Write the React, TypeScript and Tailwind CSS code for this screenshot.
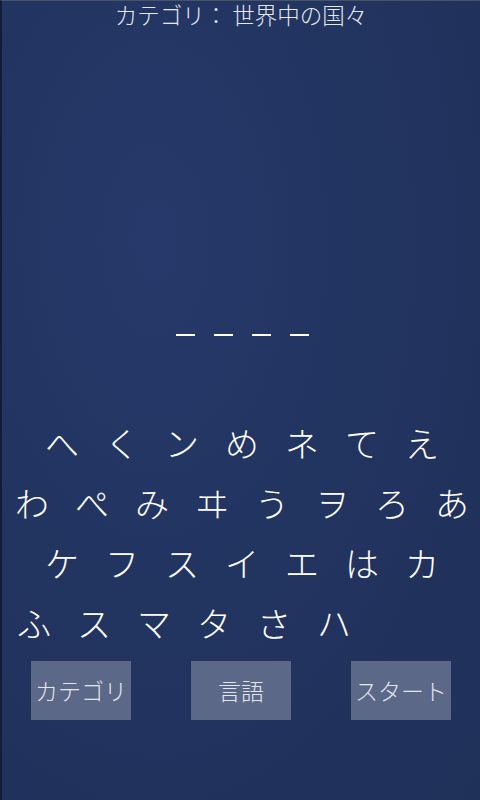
import React from "react"

const rows: { letters: string[]; align: string }[] = [
  { letters: ["へ", "く", "ン", "め", "ネ", "て", "え"], align: "justify-center" },
  { letters: ["わ", "ぺ", "み", "ヰ", "う", "ヲ", "ろ", "あ"], align: "justify-center" },
  { letters: ["ケ", "フ", "ス", "イ", "エ", "は", "カ"], align: "justify-center" },
  { letters: ["ふ", "ス", "マ", "タ", "さ", "ハ"], align: "justify-start" },
]

const buttons = ["カテゴリ", "言語", "スタート"]

export default function App() {
  return (
    <div
      className="flex h-[800px] w-[480px] flex-col overflow-hidden border-l-2 border-t border-l-[#141d38] border-t-[#4a5266] bg-[#213360] bg-[radial-gradient(ellipse_at_32%_30%,#26396a_0%,#223460_45%,#1f3059_100%)] text-white"
      style={{ fontFamily: '"Noto Sans CJK JP", "Noto Sans", sans-serif' }}
    >
      {/* タイトル */}
      <div className="h-[28px] text-center text-[22.5px] font-light leading-[27px] text-[#e6e9f0]">
        カテゴリ：&nbsp;世界中の国々
      </div>

      {/* 答えの空欄 */}
      <div className="mt-[305px] flex justify-center gap-[19px] pl-[3px]">
        {[0, 1, 2, 3].map((i) => (
          <div key={i} className="h-[2px] w-[19px] bg-white" />
        ))}
      </div>

      {/* 文字ボタン */}
      <div className="mt-[77px] flex flex-col pl-[2px]">
        {rows.map((row, r) => (
          <div key={r} className={`flex h-[60px] items-center ${row.align}`}>
            {row.letters.map((ch, i) => (
              <div
                key={i}
                className="flex h-[60px] w-[60px] shrink-0 items-center justify-center text-[34px] font-light leading-none text-white"
              >
                {ch}
              </div>
            ))}
          </div>
        ))}
      </div>

      {/* 下部ボタン */}
      <div className="-ml-[1px] mt-[8px] grid grid-cols-[160px_160px_160px]">
        {buttons.map((b) => (
          <div key={b} className="flex justify-center">
            <div className="flex h-[59px] w-[100px] items-center justify-center bg-[#5b6888] text-[23px] font-light text-[#e3e6ee]">
              {b}
            </div>
          </div>
        ))}
      </div>
    </div>
  )
}
